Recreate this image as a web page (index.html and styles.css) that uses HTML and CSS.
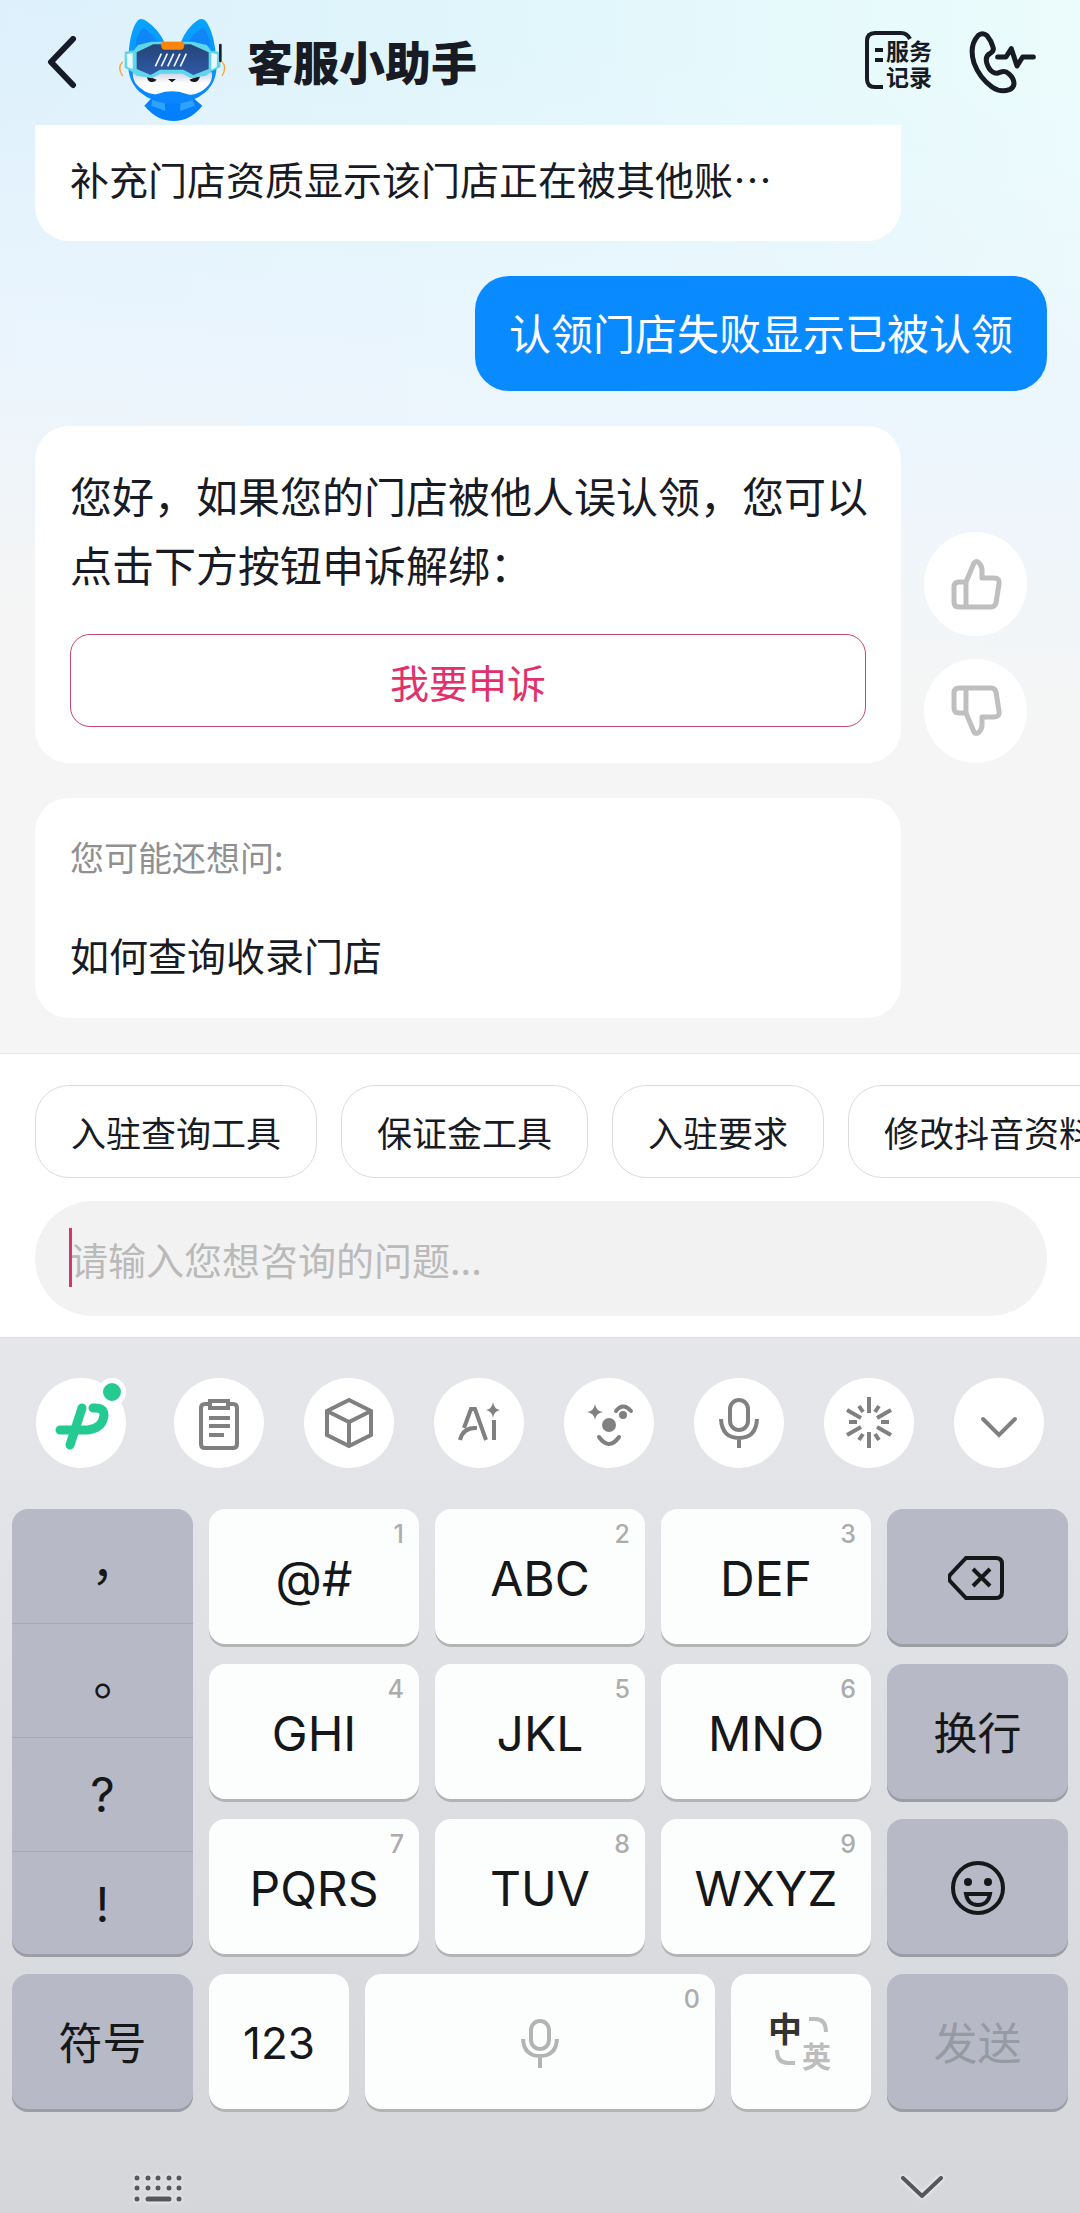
FILE: index.html
```html
<!DOCTYPE html>
<html lang="zh-CN">
<head>
    <meta charset="UTF-8">
    <meta name="viewport" content="width=device-width, initial-scale=1">
    <title>客服小助手</title>
    <link rel="stylesheet" href="styles.css">
</head>
<body>
    <div class="page">
        <header class="header">
            <button class="icon-btn back" aria-label="返回">
                <svg width="30" height="54" viewBox="0 0 30 54"><path d="M26 3 4 26l22 23" fill="none" stroke="#161b26" stroke-width="6" stroke-linecap="round" stroke-linejoin="round"/></svg>
            </button>
            <svg class="avatar" viewBox="0 -16 360 348">
                <defs>
                    <linearGradient id="ear" x1="0" y1="0" x2="0" y2="1">
                        <stop offset="0" stop-color="#08a4ff"/>
                        <stop offset="1" stop-color="#0a84ff"/>
                    </linearGradient>
                    <linearGradient id="glass" x1="0" y1="0" x2="0" y2="1">
                        <stop offset="0" stop-color="#254478"/>
                        <stop offset="1" stop-color="#2f5aa6"/>
                    </linearGradient>
                    <linearGradient id="face" x1="0" y1="0" x2="0" y2="1">
                        <stop offset="0" stop-color="#cfcfe6"/>
                        <stop offset=".5" stop-color="#ffffff"/>
                    </linearGradient>
                </defs>
                <path d="M97 286l25-26h118l31 26q-36 46-86 46t-88-46z" fill="#0380fd"/>
                <path d="M122 262l36 14 2 26-42-16zM240 262l-34 14-2 26 44-16z" fill="#2fa3fb"/>
                <path d="M50 132Q54 58 78 30q10-9 24 1 38 25 56 66h48q18-46 52-68 14-8 24 4 24 34 30 107 10 66-30 104-42 36-100 36T82 244Q40 206 50 132z" fill="url(#ear)"/>
                <path d="M70 108Q74 66 94 52q28 16 44 46zM296 108q-6-42-22-56-30 14-46 44z" fill="#137df2" opacity=".7"/>
                <path d="M62 186h238q4 36-34 58-26 14-44 6-42-14-84 0-18 6-40-7-38-22-36-57z" fill="url(#face)"/>
                <path d="M104 196l30 12q-8 10-20 6-8-4-10-18zM264 196l-32 12q8 10 20 6 10-4 12-18zM168 206h24l-12 10z" fill="#17181c"/>
                <path d="M38 124l28-4 12-16 40-10h124l42 10 14 18 24 2 4 46-30 14-14 12-46 8-24-14h-66l-26 14-46-8-14-12-22-12z" fill="#5fd7e8"/>
                <path d="M74 126l50-24h112l54 24v50l-46 18-30-16h-70l-28 16-42-18z" fill="url(#glass)"/>
                <path d="M44 132l18-4v48l-16-6zM298 128l18 4-2 38-16 8z" fill="#fff" opacity=".85"/>
                <path d="M154 94h56q8 0 7 10l-2 8q-2 6-8 6h-50q-6 0-8-6l-2-9q0-9 7-9z" fill="#fb850c"/>
                <path d="M148 130l-18 38m36-38l-18 38m37-38l-18 38m37-38l-18 38m37-38l-18 38" stroke="#eef6ff" stroke-width="5"/>
                <path d="M32 154q-18 18 0 43M330 154q16 18 0 43" fill="none" stroke="#f3a53c" stroke-width="4"/>
                <path d="M325 104v48" stroke="#182030" stroke-width="8" stroke-linecap="round"/>
            </svg>
            <h1 class="title">客服小助手</h1>
            <button class="icon-btn record" aria-label="服务记录">
                <svg width="68" height="66" viewBox="0 0 68 66">
                    <path d="M46 9q-3-6-9-6H11q-8 0-8 8v38q0 8 8 8h8M11 20h8M11 30h8" fill="none" stroke="#161b26" stroke-width="4"/>
                    <text x="22" y="30">服务</text>
                    <text x="22" y="56">记录</text>
                </svg>
            </button>
            <button class="icon-btn call" aria-label="电话客服">
                <svg width="70" height="68" viewBox="350 38 210 204">
                    <path d="M384 57q14-10 26 1 12 14 18 34 4 12-8 19-16 8-11 28 6 20 18 28 10 7 22 1 16-6 26 4 16 14 16 31-2 12-14 17-26 10-52-8-38-28-54-72-16-52 13-83zM442 122h25l16-25 17 52 17-27h32" fill="none" stroke="#161b26" stroke-width="15" stroke-linecap="round" stroke-linejoin="round"/>
                </svg>
            </button>
        </header>

        <main class="chat">
            <div class="card card-cut">补充门店资质显示该门店正在被其他账⋯</div>
            <div class="bubble">认领门店失败显示已被认领</div>
            <div class="row">
                <div class="card answer">
                    <p>您好，如果您的门店被他人误认领，您可以点击下方按钮申诉解绑：</p>
                    <button class="appeal">我要申诉</button>
                </div>
                <div class="feedback">
                    <button aria-label="有帮助">
                        <svg width="52" height="52" viewBox="0 0 52 52"><path d="M16 49V24L24 5q2-3 5 0 3 3 3 7v8h12q6 0 5 6l-3 19q-1 4-5 4H9q-5 0-5-5V29q0-5 5-5h7"/></svg>
                    </button>
                    <button aria-label="没帮助">
                        <svg width="52" height="52" viewBox="0 0 52 52"><path d="M16 3v25l8 19q2 3 5 0 3-3 3-7v-8h12q6 0 5-6L46 7q-1-4-5-4H9Q4 3 4 8v15q0 5 5 5h7"/></svg>
                    </button>
                </div>
            </div>
            <div class="card suggest">
                <h2>您可能还想问:</h2>
                <a href="#">如何查询收录门店</a>
            </div>
        </main>

        <section class="composer">
            <div class="chips">
                <button>入驻查询工具</button>
                <button>保证金工具</button>
                <button>入驻要求</button>
                <button>修改抖音资料</button>
            </div>
            <div class="field">
                <input type="text" aria-label="咨询内容" placeholder="请输入您想咨询的问题...">
                <span class="caret"></span>
            </div>
        </section>

        <section class="keyboard">
            <div class="tools">
                <button class="brand" aria-label="输入法">
                    <svg width="90" height="90" viewBox="0 0 90 90">
                        <path d="M46 30 34 67M24 52h28q15-2 16-15 0-8-11-7"/>
                    </svg>
                    <i class="dot"></i>
                </button>
                <button aria-label="剪贴板">
                    <svg width="90" height="90" viewBox="0 0 90 90"><path d="M36 26h-5q-4 0-4 4v36q0 4 4 4h28q4 0 4-4V30q0-4-4-4h-5M36 23h18v7H36zM35 40h21M35 48h21M35 57h15"/></svg>
                </button>
                <button aria-label="工具箱">
                    <svg width="90" height="90" viewBox="0 0 90 90"><path d="M45 22 67 33v24L45 68 23 57V33zM23 33l22 11 22-11M45 44v24"/></svg>
                </button>
                <button aria-label="AI">
                    <svg width="90" height="90" viewBox="0 0 90 90">
                        <path d="M30 50l7-19h4l11 31M26 62q3-13 17-12M60 42v20"/>
                        <path class="fill" d="M59 24q1 7 7 8-6 1-7 8-1-7-7-8 6-1 7-8z"/>
                    </svg>
                </button>
                <button aria-label="表情">
                    <svg width="90" height="90" viewBox="0 0 90 90">
                        <path d="M52 33q7-9 15 0M35 59q10 14 20 0" stroke-linecap="round"/>
                        <path class="fill" d="M31 26q1 7 8 8-7 1-8 8-1-7-8-8 7-1 8-8z"/>
                        <circle class="fill" cx="45" cy="47" r="7"/><circle class="fill" cx="59" cy="37" r="4"/>
                    </svg>
                </button>
                <button aria-label="语音">
                    <svg width="90" height="90" viewBox="0 0 90 90"><rect x="36" y="22" width="18" height="30" rx="9"/><path d="M27 41q1 19 18 19t18-19M45 60v10"/></svg>
                </button>
                <button aria-label="特效">
                    <svg width="90" height="90" viewBox="0 0 90 90"><path d="M45 19v16M45 54v16M23 32l14 8M53 49l14 8M23 57l14-8M53 40l14-8M25 44h8M57 44h8M35 28l4 6M51 56l4 6M55 28l-4 6M39 56l-4 6"/></svg>
                </button>
                <button aria-label="收起工具栏">
                    <svg width="90" height="90" viewBox="0 0 90 90"><path d="M29 41l16 16 16-16" stroke-linecap="round"/></svg>
                </button>
            </div>

            <div class="keys">
                <div class="punct key dark">
                    <button class="cjk">，</button>
                    <button class="cjk">。</button>
                    <button>?</button>
                    <button>!</button>
                </div>
                <button class="key">@#<small>1</small></button>
                <button class="key">ABC<small>2</small></button>
                <button class="key">DEF<small>3</small></button>
                <button class="key dark" aria-label="删除">
                    <svg width="60" height="48" viewBox="2 0 60 48"><path d="M20 4h30q6 0 6 6v28q0 6-6 6H20L4 27q-2-3 0-6zM27 15l17 17M44 15 27 32"/></svg>
                </button>
                <button class="key">GHI<small>4</small></button>
                <button class="key">JKL<small>5</small></button>
                <button class="key">MNO<small>6</small></button>
                <button class="key dark word">换行</button>
                <button class="key">PQRS<small>7</small></button>
                <button class="key">TUV<small>8</small></button>
                <button class="key">WXYZ<small>9</small></button>
                <button class="key dark" aria-label="表情面板">
                    <svg width="56" height="56" viewBox="0 0 56 56"><circle cx="28" cy="28" r="25"/><path d="M16 34h24q-2 11-12 11T16 34z"/><circle class="eye" cx="18" cy="22" r="4"/><circle class="eye" cx="38" cy="22" r="4"/></svg>
                </button>
                <button class="key dark word">符号</button>
                <div class="bottom-row">
                    <button class="key num">123</button>
                    <button class="key space" aria-label="空格">
                        <svg width="40" height="50" viewBox="0 0 40 50"><rect x="11" y="3" width="18" height="28" rx="9"/><path d="M3 21q1 17 17 17t17-17M20 38v12"/></svg>
                        <small>0</small>
                    </button>
                    <button class="key lang" aria-label="中英切换">
                        <svg width="64" height="66" viewBox="0 0 64 66">
                            <text class="zh" x="-1" y="32">中</text>
                            <text class="en" x="33" y="58">英</text>
                            <path d="M40 9h6q11 0 11 13M8 40q0 13 11 13h7"/>
                        </svg>
                    </button>
                </div>
                <button class="key dark word off" disabled>发送</button>
            </div>

            <nav class="nav">
                <button class="icon-btn" aria-label="切换键盘">
                    <svg width="56" height="32" viewBox="0 0 56 32">
                        <path d="M5 5h0M16 5h0M26 5h0M37 5h0M47 5h0M5 15h0M16 15h0M26 15h0M37 15h0M47 15h0M5 26h0M16 26h21M47 26h0"/>
                    </svg>
                </button>
                <button class="icon-btn" aria-label="收起键盘">
                    <svg width="48" height="32" viewBox="0 0 48 32"><path class="chev" d="M5 5l19 18L43 5"/></svg>
                </button>
            </nav>
        </section>
    </div>
</body>
</html>
```
FILE: styles.css
```css
*{
    box-sizing: border-box;
    margin: 0;
    padding: 0;
}
body{
    font-family: "Noto Sans CJK SC", sans-serif;
    color: #181b24;
    background-color: #d4d6d9;
    overflow-x: hidden;
}
button,input{
    font-family: inherit;
    color: inherit;
    border: none;
    background: none;
    outline: none;
}
button{
    cursor: pointer;
}
svg{
    display: block;
}
.page{
    min-height: 100vh;
    display: flex;
    flex-direction: column;
    background: linear-gradient(186deg, rgba(236,245,254,0) 100px, rgba(236,245,254,.8) 420px, #f5f5f5 720px), linear-gradient(90deg, #dcf0fb, #e0f6fb 45%, #ecfcfc);
}

/* 顶部栏 */
.header{
    display: flex;
    align-items: center;
    height: 125px;
    padding: 0 43px 0 47px;
}
.avatar{
    width: 120px;
    height: 116px;
    margin: 0 15px 0 35px;
}
.title{
    flex: 1;
    padding-bottom: 5px;
    font-size: 46px;
    line-height: 60px;
    font-weight: 900;
}
.record{
    margin-right: 35px;
}
.record text{
    font-size: 23px;
    font-weight: 700;
    fill: #161b26;
}

/* 聊天区 */
.chat{
    display: flex;
    flex-direction: column;
    gap: 35px;
    padding: 0 33px 35px 35px;
}
.card{
    margin-right: 146px;
    padding: 0 35px;
    border-radius: 34px;
    background-color: #fff;
}
.card-cut{
    border-radius: 0 0 34px 34px;
    padding-top: 24px;
    padding-bottom: 34px;
    font-size: 39px;
    line-height: 58px;
}
.bubble{
    align-self: flex-end;
    padding: 27px 34px 30px;
    border-radius: 34px;
    background-color: #0a8aff;
    color: #fff;
    font-size: 42px;
    line-height: 58px;
}
.row{
    display: flex;
    align-items: flex-end;
    gap: 23px;
    padding-right: 20px;
}
.answer{
    flex: 1;
    margin-right: 0;
    padding-top: 34px;
    padding-bottom: 36px;
    font-size: 42px;
    line-height: 69px;
}
.answer p{
    margin-right: -4px;
}
.appeal{
    display: block;
    width: 100%;
    height: 93px;
    margin-top: 36px;
    border: 1px solid #c2466f;
    border-radius: 20px;
    color: #e0316c;
    font-size: 39px;
}
.feedback{
    display: flex;
    flex-direction: column;
    gap: 23px;
}
.feedback button{
    display: flex;
    align-items: center;
    justify-content: center;
    width: 103px;
    height: 104px;
    border-radius: 50%;
    background-color: #fff;
}
.feedback path{
    fill: none;
    stroke: #bfbfbf;
    stroke-width: 5;
    stroke-linejoin: round;
}
.suggest{
    padding-top: 34px;
    padding-bottom: 35px;
}
.suggest h2{
    font-size: 34px;
    line-height: 50px;
    font-weight: 400;
    color: #909090;
}
.suggest a{
    display: block;
    margin-top: 43px;
    font-size: 39px;
    line-height: 58px;
    color: inherit;
    text-decoration: none;
}

/* 输入区 */
.composer{
    padding: 31px 33px 21px 35px;
    border-top: 1px solid #e8e8e8;
    background-color: #fff;
}
.chips{
    display: flex;
    gap: 24px;
    margin-right: -33px;
    overflow: hidden;
}
.chips button{
    flex: none;
    height: 93px;
    padding: 0 35px;
    border: 1px solid #dcdcdc;
    border-radius: 34px;
    font-size: 35px;
}
.field{
    position: relative;
    margin-top: 23px;
}
.field input{
    display: block;
    width: 100%;
    height: 115px;
    padding: 0 35px;
    border-radius: 58px;
    background-color: #f2f2f2;
    font-size: 38px;
}
.field input::placeholder{
    color: #bababa;
}
.caret{
    position: absolute;
    left: 34px;
    top: 27px;
    width: 3px;
    height: 59px;
    background-color: #d0396d;
}

/* 键盘 */
.keyboard{
    flex: 1;
    font-family: Inter, "Noto Sans CJK SC", sans-serif;
    border-top: 1px solid #dcdde0;
    background: linear-gradient(#e6e7eb, #d4d6d9);
}
.tools{
    display: flex;
    justify-content: space-between;
    padding: 40px 36px 41px;
}
.tools button{
    width: 90px;
    height: 90px;
    border-radius: 50%;
    background-color: #fff;
}
.tools .brand{
    position: relative;
    margin-right: 8px;
}
.tools path,.tools rect{
    fill: none;
    stroke: #808080;
    stroke-width: 4;
}
.tools .brand path{
    stroke: #25ca92;
    stroke-width: 9;
    stroke-linecap: round;
}
.tools .fill{
    fill: #808080;
    stroke: none;
}
.dot{
    position: absolute;
    top: 0;
    right: 0;
    width: 28px;
    height: 28px;
    border: 5px solid #fff;
    border-radius: 50%;
    background-color: #25ca92;
}
.keys{
    display: grid;
    grid-template-columns: 181fr 210fr 210fr 210fr 181fr;
    grid-auto-rows: 138px;
    gap: 17px 16px;
    padding: 0 12px;
}
.key{
    position: relative;
    display: flex;
    align-items: center;
    justify-content: center;
    border-radius: 16px;
    background-color: #fcfdfd;
    box-shadow: inset 0 -3px #b3b4b6;
    color: #161719;
    font-size: 48px;
}
.key small{
    position: absolute;
    top: 10px;
    right: 15px;
    font-size: 25px;
    line-height: 30px;
    font-weight: 500;
    color: #acacac;
}
.key svg{
    fill: none;
    stroke: #161719;
    stroke-width: 4;
}
.dark{
    background-color: #b7bac6;
    box-shadow: inset 0 -3px #9c9ea5;
}
.word{
    padding-bottom: 5px;
    font-size: 44px;
}
.key.off{
    color: #969aa3;
}
.key .eye{
    fill: #161719;
    stroke: none;
}
.punct{
    grid-row: span 3;
    display: grid;
    grid-template-rows: repeat(3, 114px) 1fr;
    align-items: stretch;
    justify-content: stretch;
}
.punct button{
    font-size: 48px;
}
.punct button + button{
    border-top: 1px solid #a5a9b5;
}
.punct .cjk{
    padding-top: 14px;
    font-family: "Noto Sans CJK TC", sans-serif;
}
.bottom-row{
    grid-column: span 3;
    display: grid;
    grid-template-columns: 140fr 350fr 140fr;
    gap: 16px;
}
.num{
    font-size: 44px;
}
.space svg{
    stroke: #b3b3b3;
}
.lang svg{
    stroke: #bdbdbd;
}
.lang text{
    stroke: none;
    font-weight: 700;
    font-size: 34px;
    fill: #333;
}
.lang .en{
    font-size: 29px;
    fill: #bdbdbd;
}
.nav{
    display: flex;
    justify-content: space-between;
    padding: 61px 134px 7px 132px;
}
.nav path{
    fill: none;
    stroke: #56575a;
    stroke-width: 5;
    stroke-linecap: round;
    stroke-linejoin: round;
}
.nav .chev{
    stroke-width: 4;
}
.nav svg{
    filter: drop-shadow(0 0 2px #fff);
}
```
